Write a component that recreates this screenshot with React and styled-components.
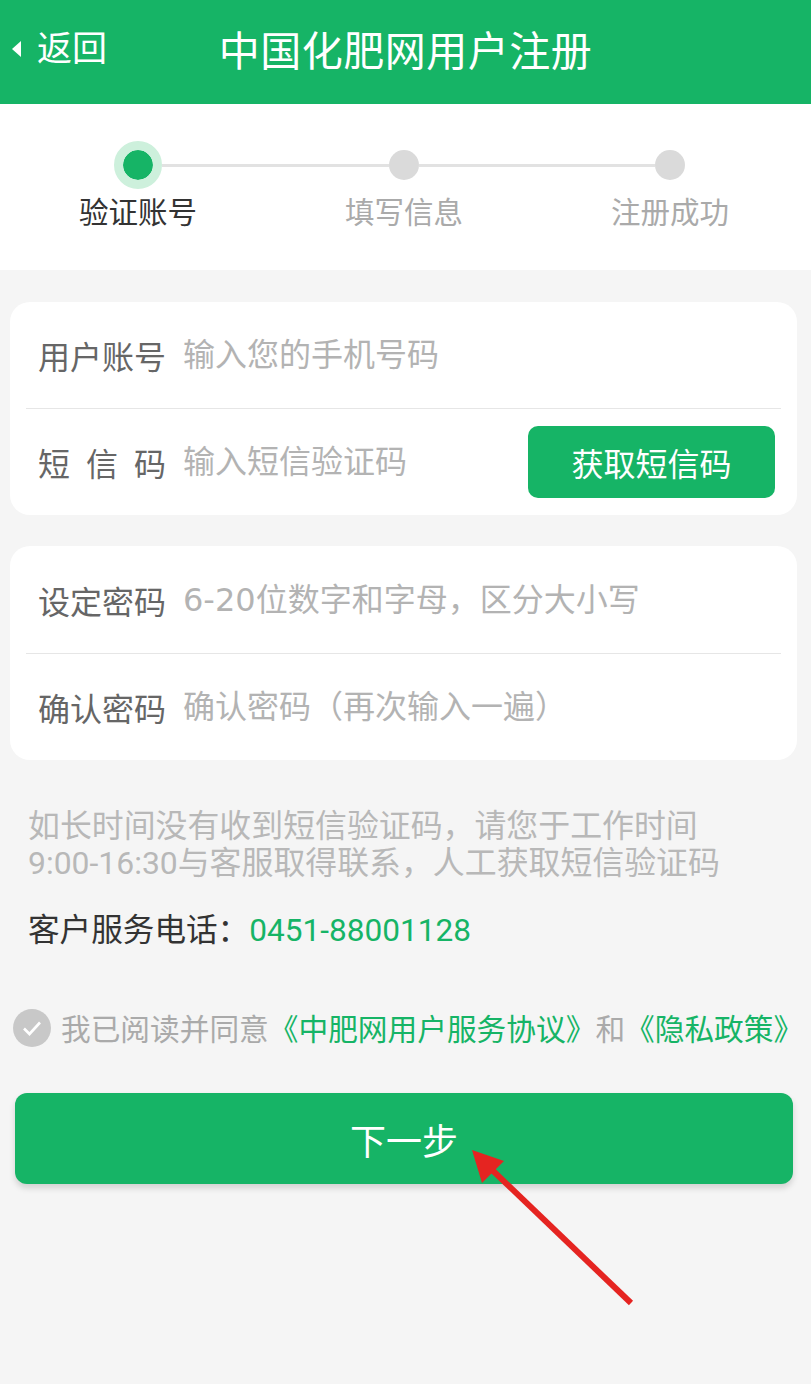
import React from "react"
import styled, { createGlobalStyle } from "styled-components"

const green = "#16b466"

const GlobalStyle = createGlobalStyle`
  * {
    box-sizing: border-box;
  }
  body {
    margin: 0;
    background: #f5f5f5;
    font-family: Roboto, "Noto Sans CJK SC", sans-serif;
  }
`

const Page = styled.div`
  position: relative;
  min-height: 1384px;
  background: #f5f5f5;
  overflow: hidden;
`

const Header = styled.header`
  display: grid;
  grid-template-columns: 1fr auto 1fr;
  align-items: center;
  height: 104px;
  background: ${green};
  color: #fff;
`

const Back = styled.div`
  display: flex;
  align-items: center;
  gap: 16px;
  padding-left: 12px;
  font-size: 35px;
  line-height: 1;
  margin-top: -6px;
`

const BackArrow = styled.span`
  width: 0;
  height: 0;
  border-top: 8px solid transparent;
  border-bottom: 8px solid transparent;
  border-right: 9px solid #fff;
`

const Title = styled.h1`
  margin: -8px 0 0;
  font-size: 41px;
  font-weight: 400;
  letter-spacing: 0.5px;
`

const Steps = styled.section`
  display: grid;
  grid-template-columns: repeat(3, 1fr);
  height: 166px;
  padding: 37px 8px 0 5px;
  background: #fff;
`

const Step = styled.div`
  display: flex;
  flex-direction: column;
  align-items: center;
`

const Track = styled.div`
  display: flex;
  align-items: center;
  width: 100%;
  height: 48px;
`

const Connector = styled.span`
  flex: 1;
  height: 3px;
  background: ${({ $hidden }) => ($hidden ? "transparent" : "#e2e2e2")};
`

const Dot = styled.span`
  flex: none;
  width: ${({ $active }) => ($active ? "48px" : "30px")};
  height: ${({ $active }) => ($active ? "48px" : "30px")};
  border-radius: 50%;
  border: ${({ $active }) => ($active ? "9px solid #cdf0dc" : "none")};
  background: ${({ $active }) => ($active ? green : "#dadada")};
  background-clip: padding-box;
`

const StepLabel = styled.span`
  margin-top: 4px;
  font-size: 29.5px;
  line-height: 40px;
  color: ${({ $active }) => ($active ? "#333" : "#aaa")};
`

const Card = styled.div`
  margin: ${({ $top }) => $top}px 14px 0 10px;
  padding: 0 16px;
  background: #fff;
  border-radius: 20px;
`

const Row = styled.div`
  display: flex;
  align-items: center;
  gap: 17px;
  height: ${({ $h }) => $h || 107}px;
  padding: 0 6px 0 12px;
  & + & {
    border-top: 1px solid #e6e6e6;
  }
`

const Label = styled.label`
  flex: none;
  width: 128px;
  font-size: 32px;
  color: #666;
  white-space: nowrap;
  letter-spacing: ${({ $spread }) => ($spread ? "16px" : "0")};
`

const Field = styled.input`
  flex: 1;
  min-width: 0;
  border: none;
  outline: none;
  padding: 0;
  background: transparent;
  font-family: "DejaVu Sans", "Noto Sans CJK SC", sans-serif;
  font-size: 32px;
  color: #333;
  &::placeholder {
    color: #b3b3b3;
  }
`

const SmsButton = styled.button`
  flex: none;
  width: 247px;
  height: 72px;
  border: none;
  border-radius: 10px;
  background: ${green};
  color: #fff;
  font-family: inherit;
  font-size: 32px;
`

const Notice = styled.p`
  margin: 48px 10px 0 28px;
  font-size: 31.9px;
  line-height: 37px;
  color: #b8b8b8;
`

const Phone = styled.p`
  margin: 30px 20px 0 28px;
  font-size: 31.6px;
  line-height: 37px;
  color: #333;
  span {
    color: ${green};
  }
`

const Agree = styled.div`
  display: flex;
  align-items: center;
  gap: 10px;
  margin: 57px 0 0 13px;
  font-size: 29.7px;
  color: #aaa;
  white-space: nowrap;
  a {
    color: ${green};
    text-decoration: none;
  }
`

const Check = styled.span`
  display: flex;
  align-items: center;
  justify-content: center;
  flex: none;
  width: 38px;
  height: 38px;
  border-radius: 50%;
  background: #c8c8c8;
`

const NextButton = styled.button`
  display: block;
  width: 778px;
  height: 91px;
  margin: 44px 0 0 15px;
  border: none;
  border-radius: 12px;
  background: ${green};
  color: #fff;
  font-family: inherit;
  font-size: 36px;
  box-shadow: 0 4px 6px rgba(0, 0, 0, 0.15);
`

const Annotation = styled.svg`
  position: absolute;
  left: 0;
  top: 0;
  pointer-events: none;
`

const steps = ["验证账号", "填写信息", "注册成功"]

export default function App() {
  return (
    <Page>
      <GlobalStyle />
      <Header>
        <Back>
          <BackArrow />
          返回
        </Back>
        <Title>中国化肥网用户注册</Title>
        <div />
      </Header>

      <Steps>
        {steps.map((s, i) => (
          <Step key={s}>
            <Track>
              <Connector $hidden={i === 0} />
              <Dot $active={i === 0} />
              <Connector $hidden={i === steps.length - 1} />
            </Track>
            <StepLabel $active={i === 0}>{s}</StepLabel>
          </Step>
        ))}
      </Steps>

      <Card $top={32}>
        <Row $h={106}>
          <Label>用户账号</Label>
          <Field placeholder="输入您的手机号码" />
        </Row>
        <Row>
          <Label $spread>短信码</Label>
          <Field placeholder="输入短信验证码" />
          <SmsButton>获取短信码</SmsButton>
        </Row>
      </Card>

      <Card $top={31}>
        <Row>
          <Label>设定密码</Label>
          <Field placeholder="6-20位数字和字母，区分大小写" />
        </Row>
        <Row>
          <Label>确认密码</Label>
          <Field placeholder="确认密码（再次输入一遍）" />
        </Row>
      </Card>

      <Notice>
        如长时间没有收到短信验证码，请您于工作时间
        <br />
        9:00-16:30与客服取得联系，人工获取短信验证码
      </Notice>
      <Phone>
        客户服务电话：<span>0451-88001128</span>
      </Phone>

      <Agree>
        <Check>
          <svg width="22" height="22" viewBox="0 0 22 22">
            <path d="M3 11.5l5.5 5.5L19 5.5" fill="none" stroke="#fff" strokeWidth="2.6" />
          </svg>
        </Check>
        <span>
          我已阅读并同意<a href="#">《中肥网用户服务协议》</a>和<a href="#">《隐私政策》</a>
        </span>
      </Agree>

      <NextButton>下一步</NextButton>

      <Annotation width="811" height="1384" viewBox="0 0 811 1384">
        <line x1="631" y1="1303" x2="488" y2="1166" stroke="#e52421" strokeWidth="6" />
        <polygon points="472,1150 482,1183 504,1161" fill="#e52421" />
      </Annotation>
    </Page>
  )
}
